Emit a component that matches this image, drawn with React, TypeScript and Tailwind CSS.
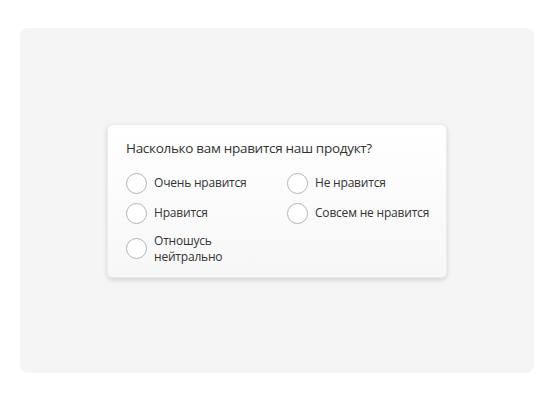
import React from 'react';

// options laid out row by row across two columns
const options = [
    'Очень нравится',
    'Не нравится',
    'Нравится',
    'Совсем не нравится',
    'Отношусь\nнейтрально',
];

const RadioOption: React.FC<{ label: string }> = ({ label }) => (
    <label className="flex items-center gap-[7px] cursor-pointer">
        <span className="w-[21px] h-[21px] shrink-0 rounded-full border border-[#b4b4b4] bg-white" />
        <span className="text-[12px] leading-[16px] tracking-[-0.2px] text-[#333] whitespace-pre-line">{label}</span>
    </label>
);

export default function App() {
    return (
        <div className="w-[557px] h-[400px] bg-white pt-[28px]" style={{ fontFamily: '"Open Sans", sans-serif' }}>
            <div className="ml-[20px] w-[514px] h-[345px] rounded-lg bg-[#f5f5f5] flex items-center justify-center">
                <div className="w-[340px] rounded-md bg-gradient-to-b from-white to-[#f7f7f7] border border-[#ececec] shadow-[0_2px_5px_rgba(0,0,0,0.14)] pt-[13px] pb-[12px] pl-[18px] pr-4">
                    <h2 className="text-[13.5px] leading-[20px] tracking-[-0.3px] text-[#333] mb-[15px]">Насколько вам нравится наш продукт?</h2>
                    <div className="grid grid-cols-[161px_1fr] gap-y-[9px]">
                        {options.map(o => (
                            <RadioOption key={o} label={o} />
                        ))}
                    </div>
                </div>
            </div>
        </div>
    );
}
